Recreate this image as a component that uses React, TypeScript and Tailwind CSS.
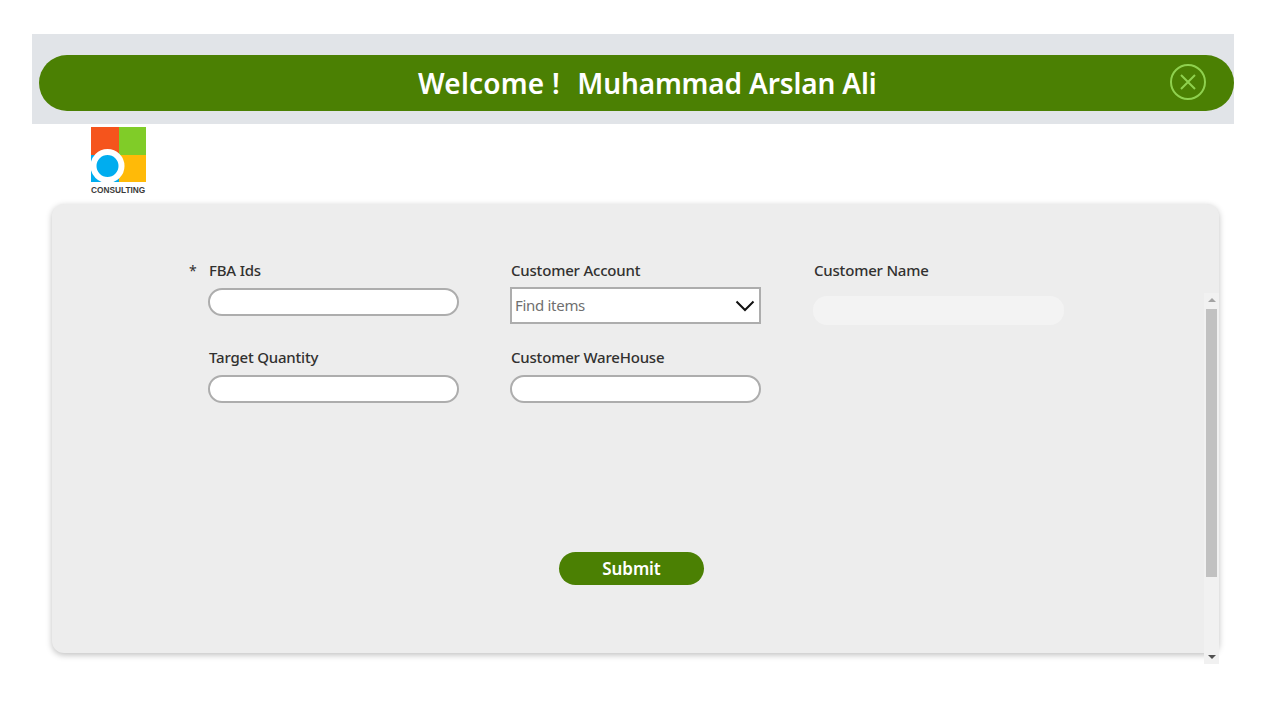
import * as React from "react";

const font = "font-['Noto_Sans','Open_Sans',sans-serif]";

const Label = ({ text }: { text: string }) => (
  <label className="block h-[30px] pl-px text-[15px] leading-[24px] font-medium tracking-[-0.2px] text-[#323130]">
    {text}
  </label>
);

const PillInput = () => (
  <div className="h-[28px] w-[251px] rounded-[14px] border-2 border-[#adadad] bg-white" />
);

const Logo = () => (
  <div className="w-[56px]">
    <svg width="56" height="55" viewBox="0 0 56 55" className="block">
      <rect x="0" y="0" width="28" height="28" fill="#f5541c" />
      <rect x="28" y="0" width="27" height="28" fill="#80cc28" />
      <rect x="28" y="28" width="27" height="27" fill="#ffba08" />
      <rect x="0" y="28" width="28" height="27" fill="#00adef" />
      <circle cx="16.5" cy="39" r="14" fill="#00adef" stroke="#fff" strokeWidth="6" />
    </svg>
    <div className="h-[16px] font-['Liberation_Sans',sans-serif] text-[8.3px] leading-[16px] font-bold whitespace-nowrap text-[#3a3a3a]">
      CONSULTING
    </div>
  </div>
);

export default function App() {
  return (
    <div className={`${font} min-h-[720px] bg-white pt-[34px] pl-[32px]`}>
      {/* top band */}
      <header className="h-[90px] w-[1202px] bg-[#e1e4e8] pt-[21px] pl-[7px]">
        <div className="flex h-[56px] w-[1195px] items-center rounded-[28px] bg-[#4b8003] pr-[27px] pl-[379px]">
          <h1 className="flex flex-1 text-[28px] leading-none font-semibold whitespace-pre text-white">
            <span className="tracking-[0.2px]">Welcome !</span>
            <span className="ml-[17.5px] tracking-[-0.15px]">Muhammad Arslan Ali</span>
          </h1>
          <svg width="38" height="38" viewBox="0 0 38 38" fill="none" className="-mt-[3px]">
            <circle cx="19" cy="19" r="17" stroke="#8fd14f" strokeWidth="2" />
            <path d="M12 12 26 26M26 12 12 26" stroke="#8fd14f" strokeWidth="2" />
          </svg>
        </div>
      </header>

      <div className="pt-[3px] pl-[59px]">
        <Logo />
      </div>

      {/* form card */}
      <main className="relative mt-[6px] ml-[20px] h-[449px] w-[1167px] rounded-[12px] bg-[#ededed] pt-[54px] pl-[156px] shadow-[0_2px_6px_rgba(0,0,0,0.25)]">
        <div className="relative grid grid-cols-[251px_252px_251px] grid-rows-[87px_58px] gap-x-[51px]">
          <span className="absolute top-0 -left-[19px] text-[14px] leading-[26px] text-[#323130]">*</span>

          <div>
            <Label text="FBA Ids" />
            <PillInput />
          </div>
          <div>
            <Label text="Customer Account" />
            <div className="-mt-px flex h-[37px] w-[251px] items-center justify-between border-2 border-[#adadad] bg-white pr-[4px] pl-[3px]">
              <span className="text-[15px] tracking-[-0.3px] text-[#6f6f6f]">Find items</span>
              <svg width="20" height="12" viewBox="0 0 20 12" fill="none">
                <path d="M1.5 1.5 10 10l8.5-8.5" stroke="#111" strokeWidth="2" />
              </svg>
            </div>
          </div>
          <div>
            <Label text="Customer Name" />
            <div className="mt-[8px] h-[29px] w-[251px] rounded-[14px] bg-[#f3f3f3]" />
          </div>

          <div>
            <Label text="Target Quantity" />
            <PillInput />
          </div>
          <div>
            <Label text="Customer WareHouse" />
            <PillInput />
          </div>
        </div>

        <button className="mt-[149px] ml-[351px] h-[33px] w-[145px] rounded-[17px] bg-[#4b8003] pt-px text-[17px] font-semibold tracking-[-0.1px] text-white">
          Submit
        </button>

        {/* scrollbar */}
        <div className="absolute top-[89px] right-0 flex h-[371px] w-[15px] flex-col items-center bg-[#f1f1f1]">
          <div className="mt-[5px] h-0 w-0 border-x-[4px] border-b-[4px] border-x-transparent border-b-[#a3a3a3]" />
          <div className="mt-[7px] h-[268px] w-[11px] bg-[#c1c1c1]" />
          <div className="mt-auto mb-[5px] h-0 w-0 border-x-[4px] border-t-[4px] border-x-transparent border-t-[#505050]" />
        </div>
      </main>
    </div>
  );
}
